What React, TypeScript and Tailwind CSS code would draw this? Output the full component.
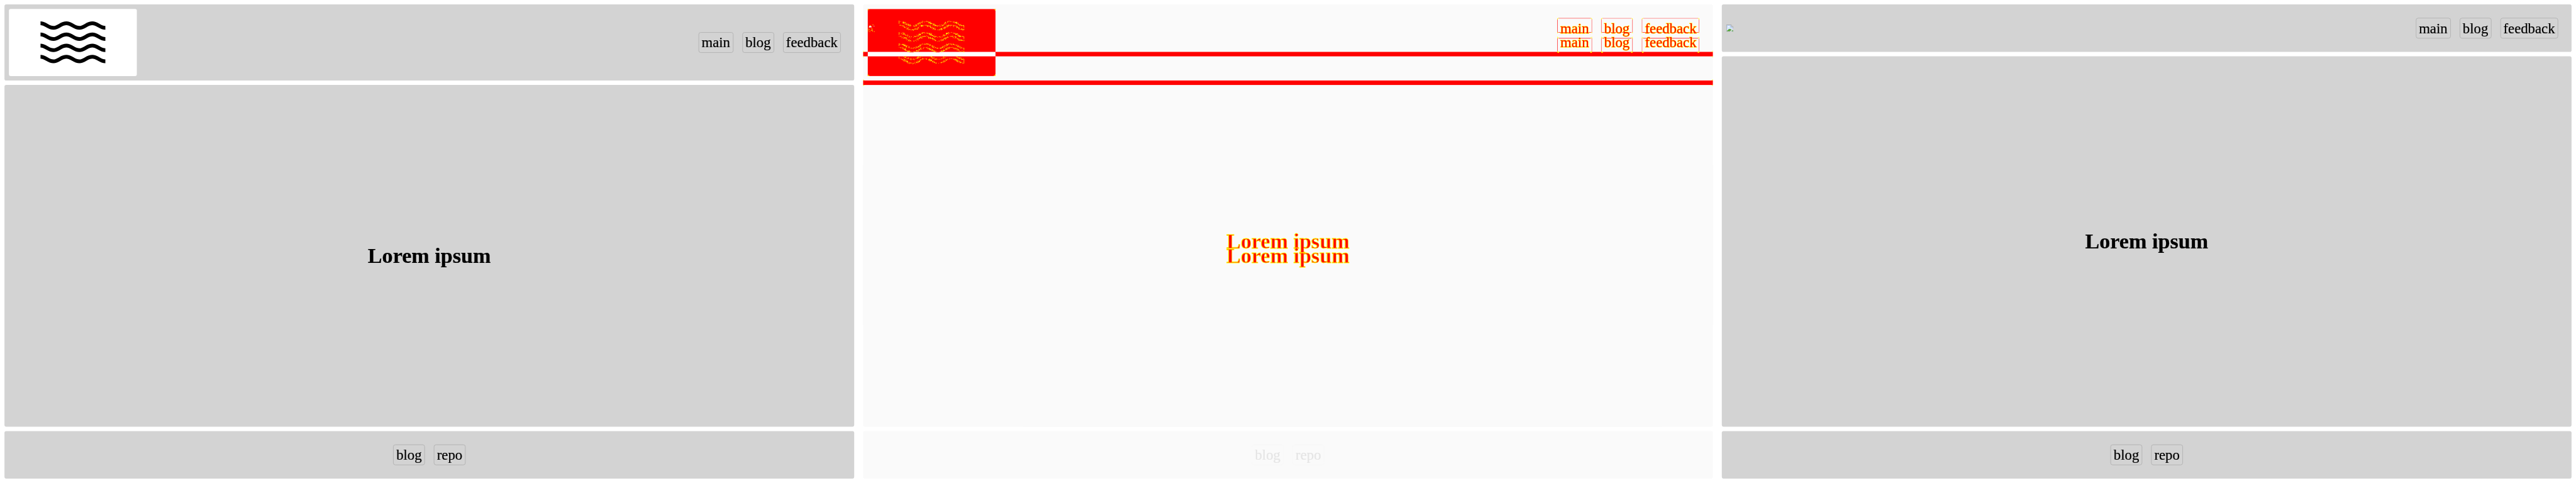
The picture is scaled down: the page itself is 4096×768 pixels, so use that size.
import type { ReactNode } from "react";

const WAVES = [52, 77, 102, 127];

function wavePath(y: number) {
  const half = 29;
  let x = 90.6;
  let d = `M${x} ${y}`;
  for (let i = 0; i < 5; i++) {
    const from = i % 2 === 0 ? y : y + 10.2;
    const to = i % 2 === 0 ? y + 10.2 : y;
    d += ` C${x + 12} ${from} ${x + half - 13} ${to} ${x + half} ${to}`;
    x += half;
  }
  return d;
}

function Logo() {
  return (
    <div className="h-[150px] w-[286px] rounded-[4px] bg-white">
      <svg className="block" width="286" height="150" viewBox="20 20 286 150" fill="none" stroke="#000" strokeWidth="8.4">
        {WAVES.map((y) => (
          <path key={y} d={wavePath(y)} />
        ))}
      </svg>
    </div>
  );
}

function BrokenImage() {
  return (
    <svg className="block" width="16" height="16" viewBox="0 0 16 16">
      <path d="M0.5 0.5h10l5 5v10h-15z" fill="#c3d9f8" />
      <path d="M1 8h14v7H1z" fill="#dbe8fb" />
      <path d="M2.5 6c0-1.2 1-1.6 1.6-1.5C4.6 3 7 3.200 7 4.700c1-.1 1.300.6 1.300 1.300z" fill="#fff" />
      <path d="M1 15c2-3 5-5.500 7.500-5.200C10.500 10 11 11 11.500 11.500L9 15z" fill="#56a636" />
      <path d="M11.500 0.500L15.500 4.500h-4z" fill="#f2f2f2" />
      <path d="M0.500 15.500V0.500H11L15.500 5V9M0.500 15.500H8M13 15.500h2.500V12M11 1v4h4" fill="none" stroke="#999" />
      <path d="M8 16l4-5.500L16 8v2l-4 3-1.500 3z" fill="#d3d3d3" />
      <path d="M11.500 15l1.500-2 2-.500V15z" fill="#56a636" />
    </svg>
  );
}

function NavButton({ children }: { children: ReactNode }) {
  return (
    <button className="box-border flex h-[46px] items-center justify-center rounded-[5px] border border-[#a9a9a9] px-[6px] text-[32px] leading-[36px] [-webkit-text-stroke:0.35px_#000]">
      {children}
    </button>
  );
}

function Page({ logo }: { logo: ReactNode }) {
  return (
    <section className="flex h-[1080px] w-[1920px] flex-col gap-[10px] p-[10px] text-black">
      <header className="flex shrink-0 items-center justify-between rounded-[4px] bg-[#d3d3d3] p-[10px]">
        {logo}
        <nav className="flex gap-[20px] px-[20px] py-[20px]">
          <NavButton>main</NavButton>
          <NavButton>blog</NavButton>
          <NavButton>feedback</NavButton>
        </nav>
      </header>
      <main className="flex flex-1 items-center justify-center rounded-[4px] bg-[#d3d3d3]">
        <h1 className="text-[48px] leading-[54px] font-bold [-webkit-text-stroke:0.35px_#000]">Lorem ipsum</h1>
      </main>
      <footer className="flex h-[106px] shrink-0 items-center justify-center gap-[20px] rounded-[4px] bg-[#d3d3d3]">
        <NavButton>blog</NavButton>
        <NavButton>repo</NavButton>
      </footer>
    </section>
  );
}

/* Scattered pixels along both edges of every wave. */
function speckles() {
  let seed = 7;
  const random = () => {
    seed = (seed * 16807) % 2147483647;
    return seed / 2147483647;
  };
  let d = "";
  for (const y of WAVES) {
    for (let x = 90; x < 236; x++) {
      const phase = ((x - 90.6) / 29) * Math.PI;
      const centre = y + 5 - 5 * Math.cos(phase);
      const slope = Math.abs(Math.sin(phase));
      for (const edge of [-4.5, 4]) {
        for (let o = -2; o <= 2; o++) {
          const chance = o === 0 ? 0.6 : Math.abs(o) === 1 ? 0.42 * slope : 0.36 * slope * slope;
          const py = Math.round(centre + edge + o);
          if (random() < chance && (py < 116 || py > 125)) d += `M${x} ${py}h1v1h-1z`;
        }
      }
    }
    if (y < 110) {
      d += `M90 ${y - 5}h1v6h-1zM235 ${y + 6}h1v4h-1zM235 ${y + 12}h1v3h-1z`;
    } else {
      d += `M90 ${y}h1v4h-1zM235 ${y + 5}h1v10h-1z`;
    }
  }
  return d;
}

function LogoDiff() {
  return (
    <svg className="block" width="286" height="150" viewBox="20 20 286 150">
      <rect x="20" y="20" width="286" height="150" fill="#f00" />
      <rect x="20" y="116" width="286" height="10" fill="#fff" />
      <path d="M114 116h9v1h-9zM172 116h9v1h-9z" fill="#f00" />
      <path d={speckles()} fill="#ff0" />
      <path d="M20 24v-3h1v-1h3v1h-2v1h-1v2zM302 20h3v1h1v3h-1v-2h-1v-1h-2zM20 166h1v2h1v1h2v1h-4zM306 166h-1v2h-1v1h-2v1h4z" fill="#ff0" />
      <path d="M20 63h1v8h-1zM24 57h4v1h-4zM23 61h2v1h-2zM31 55h2v1h-2zM23 65h1v3h-1zM28 64h3v1h-3zM29 66h2v1h-2zM30 67h1v2h-1zM27 68h2v1h-2zM24 70h2v1h-2zM30 69h2v1h-2zM34 70h2v1h-2z" fill="#ff0" />
      <path d="M24 58h3v1h-3zM23 59h6v2h-6zM32 58h1v1h-1zM35 58h1v1h-1z" fill="#fff" />
    </svg>
  );
}

function ButtonDiff({ label, width }: { label: string; width: number }) {
  const r = width - 1;
  return (
    <div className="relative h-[78px]" style={{ width }}>
      <svg className="absolute top-0 left-0" width={width} height="78">
        <path
          d={`M3 0h${width - 6}v1h-${width - 6}zM0 3h1v30h-1zM${r} 3h1v30h-1zM3 45h${width - 6}v1h-${width - 6}zM0 45h1v30h-1zM${r} 45h1v30h-1z`}
          fill="#f00"
        />
        <path d={`M2 32.500H${width - 2}`} stroke="#f00" strokeDasharray="8 2 14 3 5 2" />
        <path
          d={`M0 4V1h1V0h3v1H2v1H1v2zM${width} 4V1h-1V0h-3v1h2v1h1v2zM0 32h2v1H1v2H0zM${width} 32h-2v1h1v2h1zM0 42h1v2h3v1H1v1H0zM${width} 42h-1v2h-3v1h3v1h1zM0 74h1v1h1v1h2v2H1v-1H0zM${width} 74h-1v1h-1v1h-2v2h3v-1h1z`}
          fill="#ff0"
        />
      </svg>
      <span className="absolute top-[5px] left-[7px] text-[32px] leading-[36px] text-[#f00] [paint-order:stroke_fill] [-webkit-text-stroke:1.7px_#ff0]">{label}</span>
      <span className="absolute top-[37px] left-[7px] text-[32px] leading-[36px] text-[#f00] [paint-order:stroke_fill] [-webkit-text-stroke:1.7px_#ff0]">{label}</span>
    </div>
  );
}

function Stripe() {
  return (
    <div className="relative h-[10px] bg-[#f00]">
      <svg className="absolute -top-[3px] left-0" width="3" height="16">
        <path d="M0 0h1v2h2v1H0zM0 13h3v1H1v2H0z" fill="#ff0" />
      </svg>
      <svg className="absolute -top-[3px] right-0" width="3" height="16">
        <path d="M3 0H2v2H0v1h3zM3 13H0v1h2v2h1z" fill="#ff0" />
      </svg>
    </div>
  );
}

function FadedButton({ children }: { children: ReactNode }) {
  return (
    <div className="box-border flex h-[46px] items-center justify-center rounded-[5px] border border-[#f6f6f6] px-[6px] text-[32px] leading-[36px] text-[#e5e5e5] [-webkit-text-stroke:0.35px_#e5e5e5]">
      {children}
    </div>
  );
}

function Diff() {
  return (
    <section className="flex h-[1080px] w-[1920px] flex-col gap-[10px] p-[10px]">
      <div className="relative flex flex-1 flex-col">
        <div className="h-[106px] rounded-t-[4px] bg-[#fafafa]" />
        <Stripe />
        <div className="h-[54px] bg-[#fafafa]" />
        <Stripe />
        <div className="flex flex-1 flex-col items-center rounded-b-[4px] bg-[#fafafa] pt-[323px]">
          <h1 className="h-[32px] text-[48px] leading-[54px] font-bold text-[#f00] [-webkit-text-stroke:1.1px_#ff0]">Lorem ipsum</h1>
          <h1 className="h-[32px] text-[48px] leading-[54px] font-bold text-[#f00] [-webkit-text-stroke:1.1px_#ff0]">Lorem ipsum</h1>
        </div>
        <div className="absolute top-[10px] left-[10px]">
          <LogoDiff />
        </div>
        <div className="absolute top-[30px] right-[30px] flex gap-[20px]">
          <ButtonDiff label="main" width={78} />
          <ButtonDiff label="blog" width={71} />
          <ButtonDiff label="feedback" width={129} />
        </div>
      </div>
      <div className="flex h-[106px] shrink-0 items-center justify-center gap-[20px] rounded-[4px] bg-[#fafafa]">
        <FadedButton>blog</FadedButton>
        <FadedButton>repo</FadedButton>
      </div>
    </section>
  );
}

export default function App() {
  return (
    <div className="h-[768px] w-[4096px] overflow-hidden bg-white">
      <div className="flex h-[1080px] w-[5760px] origin-top-left scale-[0.711111] font-['Liberation_Serif',serif]">
        <Page logo={<Logo />} />
        <Diff />
        <Page logo={<BrokenImage />} />
      </div>
    </div>
  );
}
